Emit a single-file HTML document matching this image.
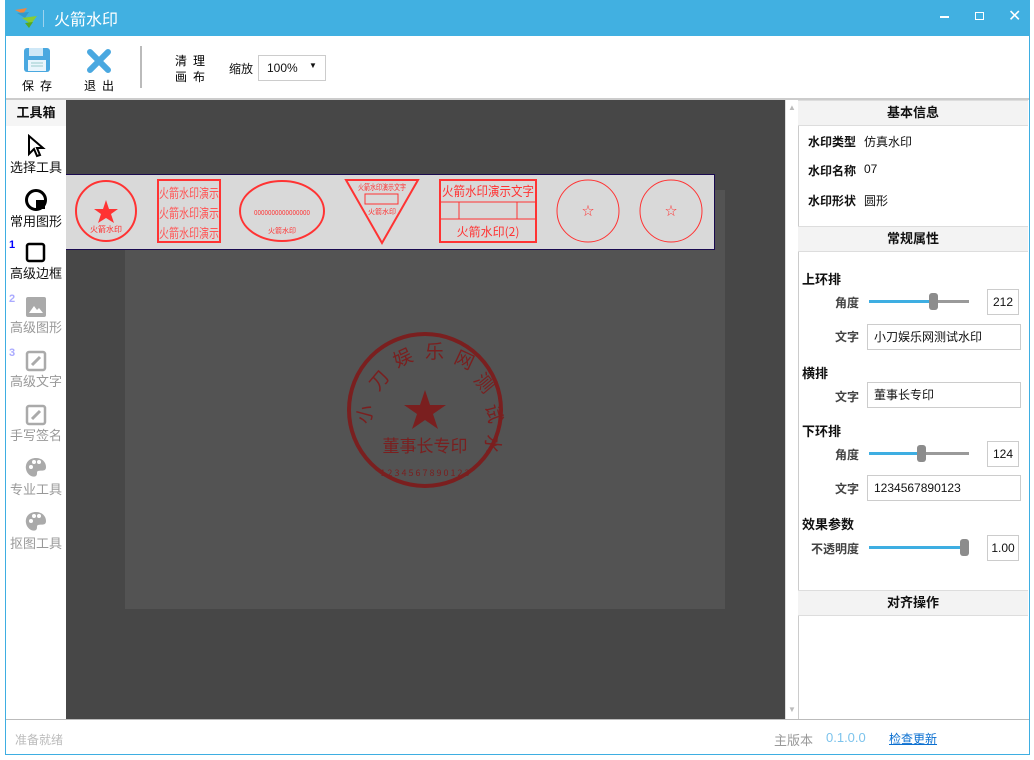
<!DOCTYPE html>
<html><head><meta charset="utf-8"><style>
*{margin:0;padding:0;box-sizing:border-box}
body{width:1034px;height:760px;background:#fff;font-family:"Liberation Sans","Noto Sans CJK SC",sans-serif;position:relative;overflow:hidden;font-size:12px;color:#111}
.a{position:absolute}
.win{left:5px;top:0;width:1025px;height:755px;border:1px solid #3eaee2;background:#fff}
.title{left:5px;top:0;width:1025px;height:36px;background:#41b0e1;color:#fff;font-size:16px}
.tb{font-size:12px;color:#000;letter-spacing:6px}
.side div{position:absolute;width:60px;text-align:center;font-size:13px}
.hdr{background:#f3f3f3;border-top:1px solid #ddd;border-bottom:1px solid #ddd;text-align:center;font-weight:bold;font-size:13px;height:26px;line-height:24px;width:230px;left:798px}
.lbl{font-weight:bold;font-size:12px}
.inp{border:1px solid #ccc;background:#fff;height:26px;line-height:24px;padding-left:6px;font-size:12px}
.num{border:1px solid #ccc;background:#fff;width:32px;height:26px;line-height:24px;text-align:center;font-size:12px}
.sl{height:3px;background:#9a9a9a;width:100px;left:869px}
.sl i{position:absolute;left:0;top:0;height:3px;background:#3eaee2}
.sl b{position:absolute;top:-7px;width:9px;height:17px;background:#8c8c8c;border-radius:3px}
</style></head><body>
<div class="a win"></div>
<div class="a title">
 <svg class="a" style="left:8px;top:6px" width="26" height="24"><path d="M2 4 L14 2 L10 8Z" fill="#e84"/><path d="M4 7 L16 6 L12 12Z" fill="#39c"/><path d="M9 12 L24 10 L18 18Z" fill="#8c3"/><path d="M12 17 L20 16 L16 22Z" fill="#5a2"/></svg>
 <div class="a" style="left:38px;top:10px;width:1px;height:17px;background:#9dd3ee"></div>
 <div class="a" style="left:49px;top:6px">火箭水印</div>
 <div class="a" style="left:935px;top:16px;width:9px;height:2px;background:#fff"></div>
 <div class="a" style="left:970px;top:12px;width:9px;height:8px;border:1.5px solid #fff"></div>
 <div class="a" style="left:1003px;top:6px;font-size:16px">✕</div>
</div>
<svg class="a" style="left:23px;top:47px" width="28" height="26"><rect x="1" y="1" width="26" height="24" rx="3" fill="#4aa8e0"/><rect x="6" y="1" width="14" height="8" fill="#cfe8f7"/><rect x="5" y="13" width="18" height="11" fill="#eaf5fc"/><path d="M8 16h12M8 19h12" stroke="#9cc" /></svg>
<div class="a tb" style="left:22px;top:77px">保存</div>
<svg class="a" style="left:86px;top:48px" width="26" height="26"><path d="M4 4L22 22M22 4L4 22" stroke="#4aa8e0" stroke-width="6" stroke-linecap="round"/></svg>
<div class="a tb" style="left:84px;top:77px">退出</div>
<div class="a" style="left:140px;top:46px;width:2px;height:42px;background:#bbb"></div>
<div class="a tb" style="left:175px;top:53px;line-height:16px">清理<br>画布</div>
<div class="a" style="left:229px;top:60px;font-size:12px">缩放</div>
<div class="a" style="left:258px;top:55px;width:68px;height:26px;border:1px solid #ccc;padding:5px 0 0 8px;font-size:12px">100%<span class="a" style="left:50px;top:5px;font-size:8px">▼</span></div>
<div class="a" style="left:6px;top:98px;width:1023px;height:2px;background:#ccc"></div>
<div class="a side" style="left:6px;top:100px;width:59px;height:620px">
 <div style="top:0;height:26px;line-height:26px;background:#f5f5f5;font-weight:bold">工具箱</div>
 <div style="top:34px"><svg width="20" height="24"><path d="M3 2L3 20L8 15L11 22L14 21L11 14L17 14Z" fill="#fff" stroke="#000" stroke-width="2"/></svg><br><span style="position:relative;top:-4px">选择工具</span></div>
 <div style="top:88px"><svg width="24" height="24"><circle cx="12" cy="12" r="9.5" fill="#fff" stroke="#000" stroke-width="3"/><rect x="12" y="12" width="9" height="9" fill="#000"/></svg><br><span style="position:relative;top:-4px">常用图形</span></div>
 <div style="top:142px"><span style="position:absolute;left:3px;top:-3px;color:#00f;font-weight:bold;font-size:11px">1</span><svg width="22" height="22"><rect x="2" y="2" width="17" height="17" rx="2" fill="none" stroke="#000" stroke-width="2.5"/></svg><br><span style="position:relative;top:-4px">高级边框</span></div>
 <div style="top:196px;color:#999"><span style="position:absolute;left:3px;top:-3px;color:#aaf;font-weight:bold;font-size:11px">2</span><svg width="22" height="22"><rect x="1" y="1" width="20" height="20" rx="2" fill="#aaa"/><path d="M4 17L9 10L12 14L14 12L18 17Z" fill="#fff"/></svg><br><span style="position:relative;top:-4px">高级图形</span></div>
 <div style="top:250px;color:#999"><span style="position:absolute;left:3px;top:-3px;color:#aaf;font-weight:bold;font-size:11px">3</span><svg width="22" height="22"><rect x="2" y="2" width="18" height="18" rx="2" fill="none" stroke="#aaa" stroke-width="2.5"/><path d="M7 15L15 7" stroke="#aaa" stroke-width="3"/></svg><br><span style="position:relative;top:-4px">高级文字</span></div>
 <div style="top:304px;color:#999"><svg width="22" height="22"><rect x="2" y="2" width="18" height="18" rx="2" fill="none" stroke="#aaa" stroke-width="2.5"/><path d="M7 15L15 7" stroke="#aaa" stroke-width="3"/></svg><br><span style="position:relative;top:-4px">手写签名</span></div>
 <div style="top:356px;color:#999"><svg width="24" height="24"><path d="M12 2C5 2 1 7 2 13C3 19 9 22 12 20C14 18 12 16 14 15C17 14 22 16 22 11C22 6 18 2 12 2Z" fill="#aaa"/><circle cx="7" cy="11" r="2" fill="#fff"/><circle cx="10" cy="6" r="2" fill="#fff"/><circle cx="15" cy="6" r="2" fill="#fff"/></svg><br><span style="position:relative;top:-4px">专业工具</span></div>
 <div style="top:410px;color:#999"><svg width="24" height="24"><path d="M12 2C5 2 1 7 2 13C3 19 9 22 12 20C14 18 12 16 14 15C17 14 22 16 22 11C22 6 18 2 12 2Z" fill="#aaa"/><circle cx="7" cy="11" r="2" fill="#fff"/><circle cx="10" cy="6" r="2" fill="#fff"/><circle cx="15" cy="6" r="2" fill="#fff"/></svg><br><span style="position:relative;top:-4px">抠图工具</span></div>
</div>
<div class="a" style="left:66px;top:100px;width:719px;height:620px;background:#474747"></div>
<div class="a" style="left:125px;top:190px;width:600px;height:419px;background:#535353"></div>
<svg class="a" style="left:345px;top:330px" width="160" height="160" font-family="Noto Sans CJK SC" fill="#7a1f1f">
 <circle cx="80" cy="80" r="76" fill="none" stroke="#7a1f1f" stroke-width="4"/>
 <path d="M80 60L85 75L101 75L88 84L93 99L80 90L67 99L72 84L59 75L75 75Z" fill="#7a1f1f"/>
 <text x="80" y="122" font-size="17" text-anchor="middle">董事长专印</text>
 <text x="24" y="95" font-size="19" transform="rotate(-75 24 95)">小</text><text x="33" y="62" font-size="19" transform="rotate(-50 33 62)">刀</text><text x="52" y="38" font-size="19" transform="rotate(-25 52 38)">娱</text><text x="80" y="28" font-size="19">乐</text><text x="108" y="32" font-size="19" transform="rotate(25 108 32)">网</text><text x="128" y="50" font-size="19" transform="rotate(50 128 50)">测</text><text x="140" y="76" font-size="19" transform="rotate(75 140 76)">试</text><text x="142" y="104" font-size="19" transform="rotate(95 142 104)">水</text>
 <text x="80" y="146" font-size="9" text-anchor="middle">1 2 3 4 5 6 7 8 9 0 1 2 3</text>
</svg>
<div class="a" style="left:66px;top:174px;width:649px;height:76px;background:#d9d9d9;border:1px solid #1a0a50;border-left:none"></div>
<svg class="a" style="left:66px;top:175px" width="649" height="74" font-family="Noto Sans CJK SC" fill="#f33">
 <g stroke="#f33" fill="none" stroke-width="2"><circle cx="40" cy="36" r="30"/><rect x="92" y="5" width="62" height="62"/><ellipse cx="216" cy="36" rx="42" ry="30"/><path d="M280 5L352 5L316 68Z"/><rect x="374" y="5" width="96" height="62"/><circle cx="522" cy="36" r="31" stroke-width="1"/><circle cx="605" cy="36" r="31" stroke-width="1"/></g>
 <path d="M40 25L43 34L52 34L45 39L48 48L40 43L32 48L35 39L28 34L37 34Z"/>
 <text x="40" y="57" font-size="8" text-anchor="middle">火箭水印</text>
 <g fill="#f55" font-size="13"><text x="93" y="23" textLength="60" lengthAdjust="spacingAndGlyphs">火箭水印演示</text><text x="93" y="43" textLength="60" lengthAdjust="spacingAndGlyphs">火箭水印演示</text><text x="93" y="63" textLength="60" lengthAdjust="spacingAndGlyphs">火箭水印演示</text></g>
 <text x="188" y="40" font-size="7" textLength="56" lengthAdjust="spacingAndGlyphs">0000000000000000</text><text x="216" y="58" font-size="7" text-anchor="middle">火箭水印</text>
 <text x="292" y="15" font-size="8" textLength="48" lengthAdjust="spacingAndGlyphs">火箭水印演示文字</text><rect x="299" y="19" width="33" height="10" fill="none" stroke="#f33"/><text x="316" y="39" font-size="7" text-anchor="middle">火箭水印</text>
 <text x="376" y="21" font-size="13" textLength="92" lengthAdjust="spacingAndGlyphs">火箭水印演示文字</text><path d="M374 27H470M374 44H470M393 27V44M451 27V44" stroke="#f33" fill="none"/><text x="422" y="61" font-size="12" text-anchor="middle">火箭水印(2)</text>
 <text x="522" y="40" font-size="12" text-anchor="middle">☆</text><text x="605" y="40" font-size="12" text-anchor="middle">☆</text>
</svg>
<div class="a" style="left:785px;top:100px;width:13px;height:620px;background:#fff;border-left:1px solid #ddd"></div>
<div class="a" style="left:788px;top:103px;font-size:8px;color:#bbb">▲</div>
<div class="a" style="left:788px;top:705px;font-size:8px;color:#bbb">▼</div>
<div class="a" style="left:798px;top:100px;width:1px;height:620px;background:#ccc"></div>
<div class="a hdr" style="top:100px">基本信息</div>
<div class="a lbl" style="left:808px;top:133px">水印类型</div><div class="a" style="left:864px;top:133px">仿真水印</div>
<div class="a lbl" style="left:808px;top:162px">水印名称</div><div class="a" style="left:864px;top:162px">07</div>
<div class="a lbl" style="left:808px;top:192px">水印形状</div><div class="a" style="left:864px;top:192px">圆形</div>
<div class="a hdr" style="top:226px">常规属性</div>
<div class="a lbl" style="left:802px;top:269px;font-size:13px">上环排</div>
<div class="a lbl" style="left:835px;top:294px;color:#444">角度</div>
<div class="a sl" style="top:300px"><i style="width:64px"></i><b style="left:60px"></b></div>
<div class="a num" style="left:987px;top:289px">212</div>
<div class="a lbl" style="left:835px;top:328px;color:#444">文字</div>
<div class="a inp" style="left:867px;top:324px;width:154px">小刀娱乐网测试水印</div>
<div class="a lbl" style="left:802px;top:363px;font-size:13px">横排</div>
<div class="a lbl" style="left:835px;top:388px;color:#444">文字</div>
<div class="a inp" style="left:867px;top:382px;width:154px">董事长专印</div>
<div class="a lbl" style="left:802px;top:421px;font-size:13px">下环排</div>
<div class="a lbl" style="left:835px;top:446px;color:#444">角度</div>
<div class="a sl" style="top:452px"><i style="width:52px"></i><b style="left:48px"></b></div>
<div class="a num" style="left:987px;top:441px">124</div>
<div class="a lbl" style="left:835px;top:480px;color:#444">文字</div>
<div class="a inp" style="left:867px;top:475px;width:154px">1234567890123</div>
<div class="a lbl" style="left:802px;top:514px;font-size:13px">效果参数</div>
<div class="a lbl" style="left:811px;top:540px;color:#444">不透明度</div>
<div class="a sl" style="top:546px"><i style="width:95px"></i><b style="left:91px"></b></div>
<div class="a num" style="left:987px;top:535px">1.00</div>
<div class="a hdr" style="top:590px">对齐操作</div>
<div class="a" style="left:6px;top:719px;width:1023px;height:1px;background:#bbb"></div>
<div class="a" style="left:15px;top:731px;color:#bbb">准备就绪</div>
<div class="a" style="left:774px;top:730px;color:#999;font-size:13px">主版本</div>
<div class="a" style="left:826px;top:730px;color:#7cc3ec;font-size:13px">0.1.0.0</div>
<div class="a" style="left:889px;top:730px;color:#0a6fd0;text-decoration:underline;font-size:12px">检查更新</div>
</body></html>
